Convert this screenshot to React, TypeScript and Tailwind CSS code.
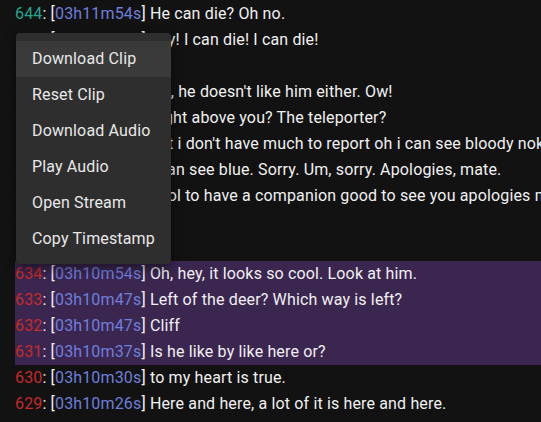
import React from 'react';

type Line = {
  id: number;
  ts: string;
  text: string;
};

const lines: Line[] = [
  { id: 644, ts: '03h11m54s', text: 'He can die? Oh no.' },
  { id: 643, ts: '03h11m50s', text: 'Yay! I can die! I can die!' },
  { id: 642, ts: '03h11m46s', text: 'Ha' },
  { id: 641, ts: '03h11m41s', text: "No, he doesn't like him either. Ow!" },
  { id: 640, ts: '03h11m35s', text: 'Right above you? The teleporter?' },
  { id: 639, ts: '03h11m28s', text: "but i don't have much to report oh i can see bloody nokia" },
  { id: 638, ts: '03h11m20s', text: 'I can see blue. Sorry. Um, sorry. Apologies, mate.' },
  { id: 637, ts: '03h11m12s', text: 'cool to have a companion good to see you apologies mate' },
  { id: 636, ts: '03h11m05s', text: 'Oh' },
  { id: 635, ts: '03h10m59s', text: 'Ok' },
  { id: 634, ts: '03h10m54s', text: 'Oh, hey, it looks so cool. Look at him.' },
  { id: 633, ts: '03h10m47s', text: 'Left of the deer? Which way is left?' },
  { id: 632, ts: '03h10m47s', text: 'Cliff' },
  { id: 631, ts: '03h10m37s', text: 'Is he like by like here or?' },
  { id: 630, ts: '03h10m30s', text: 'to my heart is true.' },
  { id: 629, ts: '03h10m26s', text: 'Here and here, a lot of it is here and here.' },
];

const selected = [634, 633, 632, 631];

const menuItems = ['Download Clip', 'Reset Clip', 'Download Audio', 'Play Audio', 'Open Stream', 'Copy Timestamp'];

const App = () => {
  return <div className="relative w-[541px] h-[422px] overflow-hidden bg-[#121212] text-[16px] tracking-[0.15px] text-[#f0f0f0]" style={{ fontFamily: 'Roboto, "Noto Sans", sans-serif' }}>
      <div className="pt-[1px] pl-[15px]">
        {lines.map(line => <div key={line.id} className={selected.includes(line.id) ? "h-[26px] leading-[26px] whitespace-nowrap overflow-hidden bg-[#3b2650]" : "h-[26px] leading-[26px] whitespace-nowrap overflow-hidden"}>
            <span className={line.id === 644 ? "text-[#26a48e]" : "text-[#c62a2a]"}>{line.id}</span>
            <span>: [</span>
            <span className="text-[#6f7fdc]">{line.ts}</span>
            <span>] {line.text}</span>
          </div>)}
      </div>

      {/* Context menu */}
      <div className="absolute left-[16px] top-[33px] w-[155px] rounded-[4px] bg-[#2e2e2e] pt-[8px] pb-[7px] shadow-[0_4px_12px_rgba(0,0,0,0.5)]">
        {menuItems.map((item, i) => <div key={item} className={i === 0 ? "h-[36px] leading-[36px] px-[16px] bg-[#3a3a3a] text-[#e8e8e8]" : "h-[36px] leading-[36px] px-[16px] text-[#e8e8e8]"}>
            {item}
          </div>)}
      </div>
    </div>;
};

export default App;
